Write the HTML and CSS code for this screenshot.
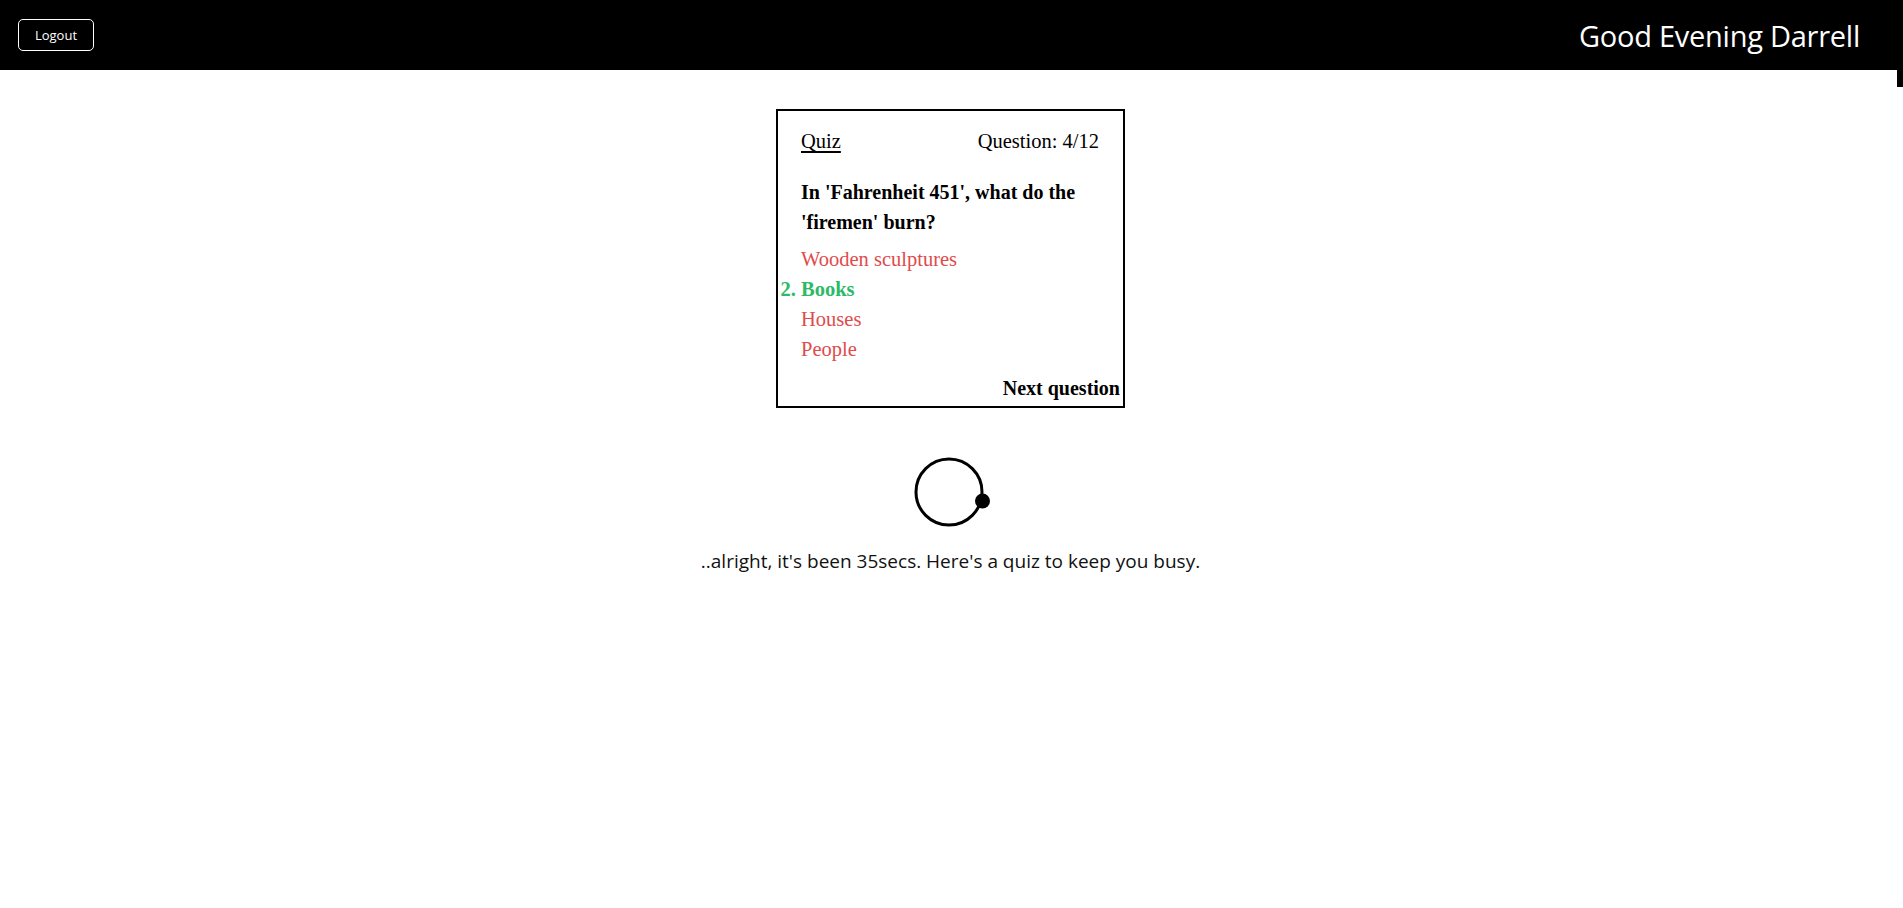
FILE: index.html
```html
<!DOCTYPE html>
<html lang="en">
<head>
<meta charset="utf-8">
<title>Quiz</title>
<link rel="stylesheet" href="styles.css">
</head>
<body>
<header class="topbar">
  <button class="logout" type="button">Logout</button>
  <h1 class="greeting">Good Evening Darrell</h1>
  <span class="edge-stub"></span>
</header>
<main class="main">
  <section class="quiz-card">
    <div class="quiz-head">
      <span class="quiz-title">Quiz</span>
      <span class="quiz-count">Question: 4/12</span>
    </div>
    <p class="quiz-question">In 'Fahrenheit 451', what do the 'firemen' burn?</p>
    <ol class="quiz-options">
      <li class="opt wrong">Wooden sculptures</li>
      <li class="opt right">Books</li>
      <li class="opt wrong">Houses</li>
      <li class="opt wrong">People</li>
    </ol>
    <div class="quiz-foot">
      <span class="next">Next question</span>
    </div>
  </section>
  <svg class="spinner" width="78" height="72" viewBox="0 0 78 72" aria-hidden="true">
    <circle cx="36" cy="35" r="33" fill="none" stroke="#000" stroke-width="3"/>
    <circle cx="69.5" cy="44" r="7.5" fill="#000"/>
  </svg>
  <p class="wait-text">..alright, it's been 35secs. Here's a quiz to keep you busy.</p>
</main>
</body>
</html>
```

FILE: styles.css
```css
html, body {
  margin: 0;
  padding: 0;
  background: #fff;
}
body {
  font-family: "Open Sans", "Noto Sans", sans-serif;
  color: #111;
}
.topbar {
  position: relative;
  height: 70px;
  background: #000;
  display: flex;
  align-items: center;
  justify-content: space-between;
  padding: 0 43px 0 18px;
}
.logout {
  width: 76px;
  height: 32px;
  background: #000;
  color: #fff;
  border: 1px solid #fff;
  border-radius: 5px;
  font-family: "Open Sans", sans-serif;
  font-size: 13px;
  padding: 0;
  cursor: pointer;
}
.greeting {
  margin: 0;
  color: #fff;
  font-weight: 400;
  font-size: 29px;
  letter-spacing: -0.25px;
}
.edge-stub {
  position: absolute;
  right: 0;
  top: 70px;
  width: 6px;
  height: 17px;
  background: #000;
}
.main {
  display: flex;
  flex-direction: column;
  align-items: center;
  padding: 39px 2px 0 0;
}
.quiz-card {
  width: 345px;
  border: 2px solid #000;
  font-family: "Liberation Serif", "DejaVu Serif", serif;
  font-size: 20.5px;
  line-height: 30px;
  color: #000;
  padding: 15px 0 4px 0;
}
.quiz-head {
  display: flex;
  justify-content: space-between;
  padding: 0 24px 0 23px;
}
.quiz-title {
  text-decoration: underline;
  text-underline-offset: 3px;
}
.quiz-question {
  margin: 21px 0 0 0;
  padding: 0 24px 0 23px;
  font-weight: 700;
  font-size: 20px;
}
.quiz-options {
  margin: 7px 0 0 0;
  padding: 0 24px 0 23px;
  list-style: none;
}
.opt {
  line-height: 30px;
}
.opt.wrong {
  color: #df4b4b;
}
.opt.right {
  color: #2dba67;
  font-weight: 700;
  list-style: decimal outside;
}
.opt.right::marker {
  content: "2. ";
}
.quiz-foot {
  display: flex;
  justify-content: flex-end;
  padding: 10px 3px 0 0;
}
.next {
  font-weight: 700;
  font-size: 20px;
  line-height: 28px;
}
.spinner {
  display: block;
  margin: 49px 0 0 2px;
}
.wait-text {
  margin: 19px 0 0 0;
  font-size: 19px;
  line-height: 26px;
}
```
